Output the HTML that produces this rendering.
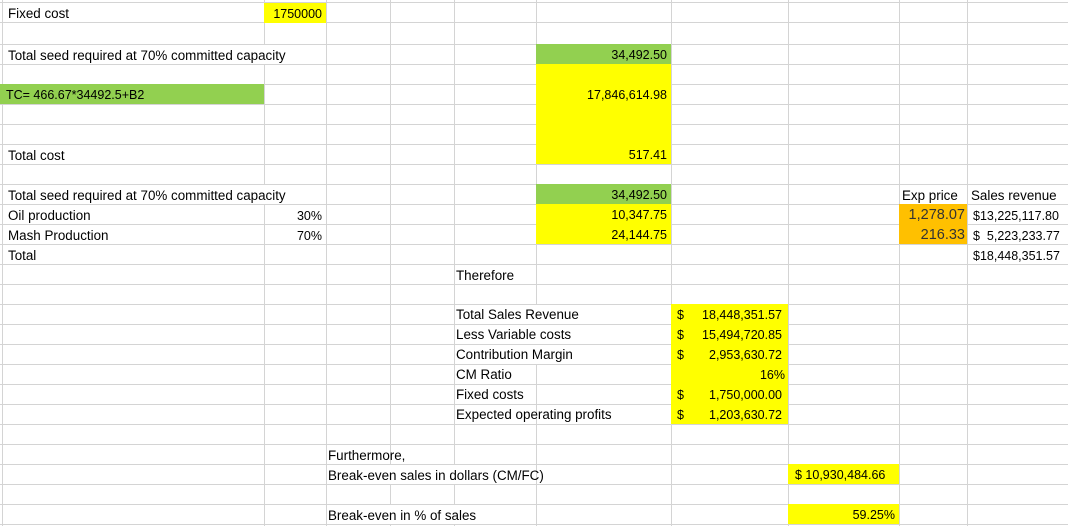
<!DOCTYPE html>
<html><head><meta charset="utf-8"><style>
html,body{margin:0;padding:0;background:#fff;width:1068px;height:526px;overflow:hidden;position:relative;font-family:"Liberation Sans",sans-serif;font-size:12.5px;color:#000}
.v{position:absolute;top:0;width:1px;height:526px;background:#d4d4d4}
.h{position:absolute;left:0;height:1px;width:1068px;background:#d4d4d4}
.c{position:absolute;height:20px;line-height:20px;white-space:nowrap;box-sizing:border-box;padding:1px 3px 0 5px;overflow:visible}
.t{font-size:13.4px}
.r{text-align:right;padding-right:4px}
.y{background:#ffff00}.g{background:#92d050}.o{background:#ffc000}.w{background:#fff}
.a{font-size:14.5px;color:#333}
</style></head><body>
<div class="v" style="left:2px"></div><div class="v" style="left:264px"></div><div class="v" style="left:326px"></div><div class="v" style="left:390px"></div><div class="v" style="left:454px"></div><div class="v" style="left:536px"></div><div class="v" style="left:671px"></div><div class="v" style="left:788px"></div><div class="v" style="left:899px"></div><div class="v" style="left:967px"></div>
<div class="h" style="top:2px"></div><div class="h" style="top:22px"></div><div class="h" style="top:44px"></div><div class="h" style="top:64px"></div><div class="h" style="top:84px"></div><div class="h" style="top:104px"></div><div class="h" style="top:124px"></div><div class="h" style="top:144px"></div><div class="h" style="top:164px"></div><div class="h" style="top:184px"></div><div class="h" style="top:204px"></div><div class="h" style="top:224px"></div><div class="h" style="top:244px"></div><div class="h" style="top:264px"></div><div class="h" style="top:284px"></div><div class="h" style="top:304px"></div><div class="h" style="top:324px"></div><div class="h" style="top:344px"></div><div class="h" style="top:364px"></div><div class="h" style="top:384px"></div><div class="h" style="top:404px"></div><div class="h" style="top:424px"></div><div class="h" style="top:444px"></div><div class="h" style="top:464px"></div><div class="h" style="top:484px"></div><div class="h" style="top:504px"></div><div class="h" style="top:524px"></div>

<div class="c t" style="left:3px;top:3px;width:261px">Fixed cost</div>
<div class="c y r" style="left:264px;top:3px;width:62px">1750000</div>

<div class="c w t" style="left:3px;top:45px;width:323px;height:19px">Total seed required at 70% committed capacity</div>
<div class="c g r" style="left:536px;top:44px;width:135px">34,492.50</div>
<div class="c y" style="left:536px;top:64px;width:135px;height:100px"></div>
<div class="c r" style="left:536px;top:84px;width:135px">17,846,614.98</div>
<div class="c r" style="left:536px;top:144px;width:135px">517.41</div>
<div class="c g" style="left:0;top:84px;width:264px;padding-left:6px">TC= 466.67*34492.5+B2</div>
<div class="c t" style="left:3px;top:145px;width:261px">Total cost</div>

<div class="c w t" style="left:3px;top:185px;width:323px;height:19px">Total seed required at 70% committed capacity</div>
<div class="c t" style="left:3px;top:205px;width:261px">Oil production</div>
<div class="c r" style="left:264px;top:205px;width:62px">30%</div>
<div class="c t" style="left:3px;top:225px;width:261px">Mash Production</div>
<div class="c r" style="left:264px;top:225px;width:62px">70%</div>
<div class="c t" style="left:3px;top:245px;width:261px">Total</div>
<div class="c g r" style="left:536px;top:184px;width:135px">34,492.50</div>
<div class="c y r" style="left:536px;top:204px;width:135px;height:40px">10,347.75<br>24,144.75</div>

<div class="c t" style="left:899px;top:185px;width:68px;padding-left:3px">Exp price</div>
<div class="c t" style="left:968px;top:185px;width:100px;padding-left:3px">Sales revenue</div>
<div class="c o r a" style="left:899px;top:204px;width:68px;height:40px;padding-right:2px;padding-top:1px;line-height:20px">1,278.07<br>216.33</div>
<div class="c" style="left:968px;top:205px;width:100px;padding-left:5px">$13,225,117.80</div>
<div class="c" style="left:968px;top:225px;width:100px;padding-left:5px">$&nbsp;&nbsp;5,223,233.77</div>
<div class="c" style="left:968px;top:245px;width:100px;padding-left:5px">$18,448,351.57</div>

<div class="c t" style="left:454px;top:265px;width:82px;padding-left:2px">Therefore</div>

<div class="c w t" style="left:455px;top:305px;width:216px;height:99px;line-height:20px;padding-left:1px;padding-top:0">Total Sales Revenue<br>Less Variable costs<br>Contribution Margin<br>CM Ratio<br>Fixed costs<br>Expected operating profits</div>
<div class="v" style="left:536px;top:364px;height:40px"></div>
<div class="h" style="left:455px;width:216px;top:324px"></div><div class="h" style="left:455px;width:216px;top:344px"></div><div class="h" style="left:455px;width:216px;top:364px"></div><div class="h" style="left:455px;width:216px;top:384px"></div>
<div class="c y" style="left:671px;top:304px;width:117px;height:120px;padding:1px 0 0 0">
<div style="position:relative;height:20px"><span style="position:absolute;left:6px">$</span><span style="position:absolute;right:6px">18,448,351.57</span></div>
<div style="position:relative;height:20px"><span style="position:absolute;left:6px">$</span><span style="position:absolute;right:6px">15,494,720.85</span></div>
<div style="position:relative;height:20px"><span style="position:absolute;left:6px">$</span><span style="position:absolute;right:6px">2,953,630.72</span></div>
<div style="position:relative;height:20px"><span style="position:absolute;right:3px">16%</span></div>
<div style="position:relative;height:20px"><span style="position:absolute;left:6px">$</span><span style="position:absolute;right:6px">1,750,000.00</span></div>
<div style="position:relative;height:20px"><span style="position:absolute;left:6px">$</span><span style="position:absolute;right:6px">1,203,630.72</span></div>
</div>

<div class="c t" style="left:326px;top:445px;width:128px;padding-left:2px">Furthermore,</div>
<div class="c w t" style="left:327px;top:465px;width:209px;height:19px;padding-left:1px">Break-even sales in dollars (CM/FC)</div>
<div class="c y" style="left:788px;top:464px;width:111px;padding-left:7px">$ 10,930,484.66</div>
<div class="c w t" style="left:327px;top:505px;width:209px;height:19px;padding-left:1px">Break-even in % of sales</div>
<div class="c y r" style="left:788px;top:504px;width:111px">59.25%</div>
</body></html>
